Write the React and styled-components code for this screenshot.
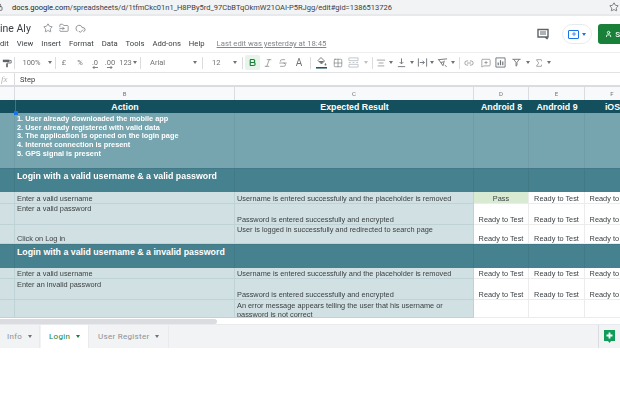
import React from 'react';
import styled, { createGlobalStyle } from 'styled-components';
import {
  Star, FolderInput, CloudCheck, Bold, Italic, Strikethrough, Grid2x2, Lock,
  AlignCenter, Link2, MessageSquarePlus, Sigma, Plus, User,
} from 'lucide-react';

const GlobalStyle = createGlobalStyle`
  html, body { margin: 0; padding: 0; background: #fff; overflow: hidden; }
  body { font-family: "Liberation Sans", Arial, sans-serif; }
  * { box-sizing: border-box; }
`;

const Page = styled.div`
  width: 620px;
  height: 403px;
  overflow: hidden;
  display: flex;
  flex-direction: column;
  filter: blur(0.4px);
`;

const AddressBar = styled.div`
  height: 16px;
  flex: none;
  background: #f1f3f4;
  border-bottom: 2px solid #e8e9eb;
  display: flex;
  align-items: center;
  justify-content: space-between;
  padding-right: 1px;
  font: 7.5px "Roboto", sans-serif;
  color: #5f6368;
  b { font-weight: 400; color: #202124; }
`;

const AddressLeft = styled.div`
  display: flex;
  align-items: center;
  gap: 9px;
  margin-left: -5px;
  color: #3c4043;
`;

const Header = styled.div`
  height: 36px;
  flex: none;
  position: relative;
  display: flex;
  flex-direction: column;
`;

const TitleRow = styled.div`
  height: 20px;
  padding-top: 5px;
  display: flex;
  align-items: center;
  font: 10.5px "Roboto", sans-serif;
  color: #3c4043;
`;

const TitleIcons = styled.div`
  display: flex;
  gap: 6px;
  margin-left: 12px;
  color: #5f6368;
`;

const MenuRow = styled.div`
  display: flex;
  gap: 8px;
  font: 7.7px "Roboto", sans-serif;
  color: #3c4043;
  margin-top: 3px;
`;

const LastEdit = styled.span`
  color: #80868b;
  text-decoration: underline;
  margin-left: 4px;
`;

const RightActions = styled.div`
  position: absolute;
  right: 0;
  top: 8px;
  display: flex;
  align-items: center;
  color: #5f6368;
`;

const PresentPill = styled.div`
  width: 30px;
  height: 20px;
  margin-left: 13px;
  border: 1px solid #e8eaed;
  border-radius: 10px;
  display: flex;
  align-items: center;
  justify-content: center;
  gap: 3px;
`;

const PresentBox = styled.span`
  width: 11px;
  height: 9px;
  border: 1.5px solid #1a73e8;
  border-radius: 1px;
  display: flex;
  align-items: center;
  justify-content: center;
  color: #1a73e8;
`;

const ShareButton = styled.div`
  width: 22px;
  height: 20px;
  margin-left: 6px;
  background: #188038;
  border-radius: 3px 0 0 3px;
  color: #fff;
  font: 500 8px "Roboto", sans-serif;
  display: flex;
  align-items: center;
  gap: 3px;
  padding-left: 7px;
`;

const Toolbar = styled.div`
  height: 21px;
  flex: none;
  border-top: 1px solid #eceef0;
  border-bottom: 1px solid #e0e2e4;
  display: flex;
  align-items: center;
  font: 7.5px "Roboto", sans-serif;
  color: #6f7377;
  overflow: hidden;
`;

const ToolText = styled.span`
  width: ${p => p.$w}px;
  padding-left: ${p => p.$pad || 0}px;
  flex: none;
  text-align: ${p => (p.$pad ? 'left' : 'center')};
  white-space: nowrap;
`;

const DecimalMark = styled.span`
  width: ${p => p.$w}px;
  flex: none;
  display: flex;
  flex-direction: column;
  align-items: center;
  line-height: 7px;
  margin-top: 2px;
`;

const ToolIcon = styled.span`
  width: ${p => p.$w || 15}px;
  margin-left: ${p => p.$l || 0}px;
  height: 15px;
  flex: none;
  display: flex;
  align-items: center;
  justify-content: center;
  border-radius: 2px;
  font-size: 10px;
  color: ${p => p.$color || '#6f7377'};
  background: ${p => p.$bg || 'transparent'};
`;

const Sep = styled.span`
  width: 1px;
  height: 12px;
  flex: none;
  background: #dadce0;
  margin-left: ${p => p.$l || 0}px;
`;

const Caret = styled.span`
  flex: none;
  width: 0;
  height: 0;
  margin-left: ${p => p.$m ?? 0}px;
  border-left: 2.5px solid transparent;
  border-right: 2.5px solid transparent;
  border-top: 3px solid ${p => p.$color || '#6f7377'};
`;

const FormulaBar = styled.div`
  height: 14px;
  flex: none;
  display: flex;
  align-items: center;
  font: 7.5px "Roboto", sans-serif;
  color: #3c4043;
  border-bottom: 2px solid #dadce0;
  i { font: italic 9px "Liberation Serif", serif; color: #b0b3b7; width: 14px; padding-left: 1px; }
  span:last-child { margin-left: 5px; }
`;

const Sheet = styled.div`
  height: 231px;
  flex: none;
  display: grid;
  grid-template-columns: 15px 220px 239px 55px 56px 55px;
  grid-template-rows: 13px 13px 55px 24px 12px 21px 19px 24px 11px 21px 18px;
  overflow: hidden;
`;

const ColHead = styled.div`
  background: #f8f9fa;
  border-right: 1px solid #dadce0;
  font: 6px "Roboto", sans-serif;
  color: #6f7377;
  display: flex;
  align-items: center;
  justify-content: center;
  padding-bottom: 1px;
`;

const HeadCell = styled.div`
  background: #134f5c;
  color: #fff;
  font-weight: 700;
  font-size: 8.8px;
  display: flex;
  align-items: center;
  justify-content: center;
  white-space: nowrap;
  position: relative;
`;

const SelectEdge = styled.span`
  position: absolute;
  left: 0;
  top: 0;
  bottom: 0;
  width: 1px;
  background: #1a73e8;
  &::after {
    content: '';
    position: absolute;
    left: -1px;
    bottom: -2px;
    width: 4px;
    height: 4px;
    background: #1a73e8;
  }
`;

const Precondition = styled.div`
  background: #76a5af;
  border-right: 1px solid #6f9ca6;
  color: #fff;
  font-weight: 700;
  font-size: 7.36px;
  line-height: 8.7px;
  padding: 2px 2px;
  white-space: pre;
`;

const SectionCell = styled.div`
  background: #45818e;
  border-right: 1px solid #417a86;
  border-top: 1px solid #417a86;
  color: #fff;
  font-weight: 700;
  font-size: 8.8px;
  line-height: 11px;
  padding: 1.5px 2px;
  white-space: nowrap;
`;

const Cell = styled.div`
  background: ${p => (p.$tint ? '#d0e0e3' : p.$pass ? '#d9ead3' : '#fff')};
  border-right: 1px solid ${p => (p.$tint ? '#bfd3d7' : '#ececec')};
  border-bottom: 1px solid ${p => (p.$tint ? '#bfd3d7' : '#ececec')};
  color: #3a3f42;
  font-size: 7.35px;
  line-height: 8.5px;
  padding: ${p => p.$top || 0}px 2px 0;
  display: flex;
  align-items: ${p => (p.$top ? 'flex-start' : 'flex-end')};
  justify-content: ${p => (p.$center ? 'center' : 'flex-start')};
  white-space: ${p => (p.$wrap ? 'normal' : 'nowrap')};
  overflow: hidden;
`;

const ScrollRow = styled.div`
  height: 6px;
  flex: none;
  padding-top: 1px;
  span {
    display: block;
    width: 217px;
    height: 5px;
    background: #dadce0;
    border-radius: 0 3px 3px 0;
  }
`;

const TabBar = styled.div`
  height: 24px;
  flex: none;
  background: #f1f3f4;
  display: flex;
  align-items: stretch;
  border-top: 1px solid #e8eaed;
  font: 400 8px "Roboto", sans-serif;
  letter-spacing: 0.3px;
`;

const Tab = styled.div`
  display: flex;
  align-items: center;
  width: ${p => p.$w}px;
  padding-left: ${p => p.$pad}px;
  flex: none;
  margin-left: ${p => p.$l || 0}px;
  color: ${p => (p.$active ? '#188038' : '#8d9196')};
  background: ${p => (p.$active ? '#fff' : 'transparent')};
  border-right: 1px solid #e8eaed;
`;

const AddSheet = styled.div`
  margin-left: auto;
  width: 22px;
  border-left: 1px solid #dadce0;
  display: flex;
  align-items: center;
  justify-content: center;
`;

const precond = `1. User already downloaded the mobile app
2. User already registered with valid data
3. The application is opened on the login page
4. Internet connection is present
5. GPS signal is present`;

const menus = ['dit', 'View', 'Insert', 'Format', 'Data', 'Tools', 'Add-ons', 'Help'];
const icon = { size: 10, strokeWidth: 1.5 };

const Svg = ({ children, size = 11, vb = 12 }) => (
  <svg width={size} height={size} viewBox={`0 0 ${vb} ${vb}`} fill="none" stroke="currentColor" strokeWidth="1">{children}</svg>
);

const PaintFormat = () => (
  <Svg size={10}>
    <path d="M1 2h8v3H1z" fill="#5f6368" stroke="none" />
    <path d="M9 3h2v3H6v1.500" stroke="#5f6368" />
    <path d="M5 7h2v4H5z" fill="#5f6368" stroke="none" />
  </Svg>
);

const FillColor = () => (
  <Svg size={13} vb={13}>
    <path d="M6 1.500l3.500 3.500-3 3L3 4.500z" strokeWidth="0.9" />
    <path d="M3.500 5h5.500l-2.500 2.800z" fill="currentColor" stroke="none" />
    <path d="M10.500 7c.6.900.9 1.300.9 1.700a.9.900 0 0 1-1.800 0c0-.4.300-.8.900-1.700z" fill="currentColor" stroke="none" />
    <path d="M1 11.800h11" stroke="#134f5c" strokeWidth="1.500" />
  </Svg>
);

const MergeCells = () => (
  <Svg>
    <path d="M1 1h10v3H1zM1 8h10v3H1z" />
    <path d="M3 6H1M11 6H9M7 6H5" />
  </Svg>
);

const VerticalAlign = () => (
  <Svg>
    <path d="M6 1.500v6M4 5.500L6 7.500 8 5.500M2 10.500h8" />
  </Svg>
);

const TextWrap = () => (
  <Svg>
    <path d="M1.500 1.500v9M10.500 1.500v9M3 6h5M6 4l2 2-2 2" />
  </Svg>
);

const TextRotate = () => (
  <Svg>
    <path d="M1 3l10-1M2 3l4.500 6.500L8 4M4.200 6l3-.7M8.500 9l2 1.500" />
  </Svg>
);

const ChartBox = () => (
  <Svg>
    <path d="M1 1h10v10H1z" />
    <path d="M3.500 9V6M6 9V3.500M8.500 9V5" strokeWidth="1.300" />
  </Svg>
);

const FilterFunnel = () => (
  <Svg>
    <path d="M1.500 2.500h9M3 2.500l2.500 3.500v4l1-.8V6L9 2.500" />
  </Svg>
);

const CommentBox = () => (
  <svg width="12" height="12" viewBox="0 0 12 12" fill="none" stroke="#5f6368" strokeWidth="1.400">
    <path d="M1 1.500h10v7.500H9.500l1 2-2.500-2H1z" />
    <path d="M3 4h6M3 6h6" strokeWidth="1" />
  </svg>
);

const AddBadge = () => (
  <svg width="11" height="13" viewBox="0 0 11 13">
    <path d="M0 0h11v11H7l-1.500 2L4 11H0z" fill="#0f9d58" />
    <path d="M5.500 2.500v6M2.500 5.500h6" stroke="#fff" strokeWidth="1.800" />
  </svg>
);

const DecimalArrow = ({ flip }) => (
  <svg width="6" height="3" viewBox="0 0 6 3" fill="none" stroke="#5f6368" strokeWidth="0.8">
    <path d={flip ? 'M0 1.500h5M3.500 0l1.500 1.500L3.500 3' : 'M6 1.500H1M2.500 0L1 1.500 2.500 3'} />
  </svg>
);

const ReadyCells = () => (
  <>
    <Cell $center>Ready to Test</Cell>
    <Cell $center>Ready to Test</Cell>
    <Cell $center>Ready to Test</Cell>
  </>
);

const SectionRow = ({ title }) => (
  <>
    <SectionCell />
    <SectionCell>{title}</SectionCell>
    <SectionCell />
    <SectionCell />
    <SectionCell />
    <SectionCell />
  </>
);

const App = () => (
  <Page>
    <GlobalStyle />
    <AddressBar>
      <AddressLeft>
        <Lock size={8} strokeWidth={2} />
        <span><b>docs.google.com</b>/spreadsheets/d/1tfmCkc01n1_H8PBy5rd_97CbBTqOkmW21OAI-P5RJgg/edit#gid=1386513726</span>
      </AddressLeft>
      <Star size={10} strokeWidth={1.5} color="#3c4043" />
    </AddressBar>

    <Header>
      <TitleRow>
        ine Aly
        <TitleIcons>
          <Star size={10} strokeWidth={1.5} />
          <FolderInput size={10} strokeWidth={1.5} />
          <CloudCheck size={11} strokeWidth={1.5} />
        </TitleIcons>
      </TitleRow>
      <MenuRow>
        {menus.map(m => <span key={m}>{m}</span>)}
        <LastEdit>Last edit was yesterday at 18:45</LastEdit>
      </MenuRow>
      <RightActions>
        <CommentBox />
        <PresentPill>
          <PresentBox><Plus size={6} strokeWidth={3} /></PresentBox>
          <Caret $color="#1a73e8" />
        </PresentPill>
        <ShareButton><User size={8} strokeWidth={3} />S</ShareButton>
      </RightActions>
    </Header>

    <Toolbar>
      <ToolIcon $w={14}><PaintFormat /></ToolIcon>
      <Sep />
      <ToolText $w={33}>100%</ToolText>
      <Caret /><Sep $l={3} />
      <ToolText $w={16}>£</ToolText>
      <ToolText $w={16}>%</ToolText>
      <DecimalMark $w={14}>.0<DecimalArrow /></DecimalMark>
      <DecimalMark $w={16}>.00<DecimalArrow flip /></DecimalMark>
      <ToolText $w={15}>123</ToolText>
      <Caret /><Sep $l={3} />
      <ToolText $w={52} $pad={9}>Arial</ToolText>
      <Caret /><Sep $l={5} />
      <ToolText $w={30} $pad={9}>12</ToolText>
      <Caret /><Sep $l={5} />
      <ToolIcon $l={2} $bg="#e6f4ea" $color="#188038"><Bold size={9} strokeWidth={3} /></ToolIcon>
      <ToolIcon $w={15}><Italic {...icon} /></ToolIcon>
      <ToolIcon $w={16}><Strikethrough {...icon} /></ToolIcon>
      <ToolIcon $w={16}>A</ToolIcon>
      <Sep $l={3} />
      <ToolIcon $w={20}><FillColor /></ToolIcon>
      <ToolIcon $w={13}><Grid2x2 {...icon} /></ToolIcon>
      <ToolIcon $w={19} $color="#bdc1c6"><MergeCells /></ToolIcon>
      <Caret $m={1} $color="#bdc1c6" /><Sep $l={4} />
      <ToolIcon $w={16}><AlignCenter {...icon} /></ToolIcon><Caret />
      <ToolIcon $w={17}><VerticalAlign /></ToolIcon><Caret />
      <ToolIcon $w={16}><TextWrap /></ToolIcon><Caret />
      <ToolIcon $w={17}><TextRotate /></ToolIcon><Caret /><Sep $l={4} />
      <ToolIcon $w={18}><Link2 {...icon} /></ToolIcon>
      <ToolIcon $w={15}><MessageSquarePlus {...icon} /></ToolIcon>
      <ToolIcon $w={15}><ChartBox /></ToolIcon>
      <ToolIcon $w={16}><FilterFunnel /></ToolIcon><Caret $m={2} />
      <ToolIcon $w={17}><Sigma {...icon} /></ToolIcon><Caret />
    </Toolbar>

    <FormulaBar>
      <i>fx</i>
      <Sep />
      <span>Step</span>
    </FormulaBar>

    <Sheet>
      <ColHead />
      <ColHead>B</ColHead>
      <ColHead>C</ColHead>
      <ColHead>D</ColHead>
      <ColHead>E</ColHead>
      <ColHead>F</ColHead>

      <HeadCell />
      <HeadCell>Action<SelectEdge /></HeadCell>
      <HeadCell>Expected Result</HeadCell>
      <HeadCell>Android 8</HeadCell>
      <HeadCell>Android 9</HeadCell>
      <HeadCell>iOS</HeadCell>

      <Precondition />
      <Precondition>{precond}</Precondition>
      <Precondition />
      <Precondition />
      <Precondition />
      <Precondition />

      <SectionRow title="Login with a valid username & a valid password" />

      <Cell $tint />
      <Cell $tint>Enter a valid username</Cell>
      <Cell $tint>Username is entered successfully and the placeholder is removed</Cell>
      <Cell $pass $center>Pass</Cell>
      <Cell $center>Ready to Test</Cell>
      <Cell $center>Ready to Test</Cell>

      <Cell $tint />
      <Cell $tint $top={1}>Enter a valid password</Cell>
      <Cell $tint>Password is entered successfully and encrypted</Cell>
      <ReadyCells />

      <Cell $tint />
      <Cell $tint>Click on Log in</Cell>
      <Cell $tint $top={1}>User is logged in successfully and redirected to search page</Cell>
      <ReadyCells />

      <SectionRow title="Login with a valid username & a invalid password" />

      <Cell $tint />
      <Cell $tint>Enter a valid username</Cell>
      <Cell $tint>Username is entered successfully and the placeholder is removed</Cell>
      <ReadyCells />

      <Cell $tint />
      <Cell $tint $top={2}>Enter an invalid password</Cell>
      <Cell $tint>Password is entered successfully and encrypted</Cell>
      <ReadyCells />

      <Cell $tint />
      <Cell $tint />
      <Cell $tint $top={2} $wrap>An error message appears telling the user that his username or password is not correct</Cell>
      <Cell />
      <Cell />
      <Cell />
    </Sheet>

    <ScrollRow><span /></ScrollRow>

    <TabBar>
      <Tab $w={40} $pad={7}>Info<Caret $m={6} /></Tab>
      <Tab $w={48} $l={1} $pad={8} $active>Login<Caret $m={6} $color="#188038" /></Tab>
      <Tab $w={80} $pad={9}>User Register<Caret $m={6} /></Tab>
      <AddSheet><AddBadge /></AddSheet>
    </TabBar>
  </Page>
);

export default App;
